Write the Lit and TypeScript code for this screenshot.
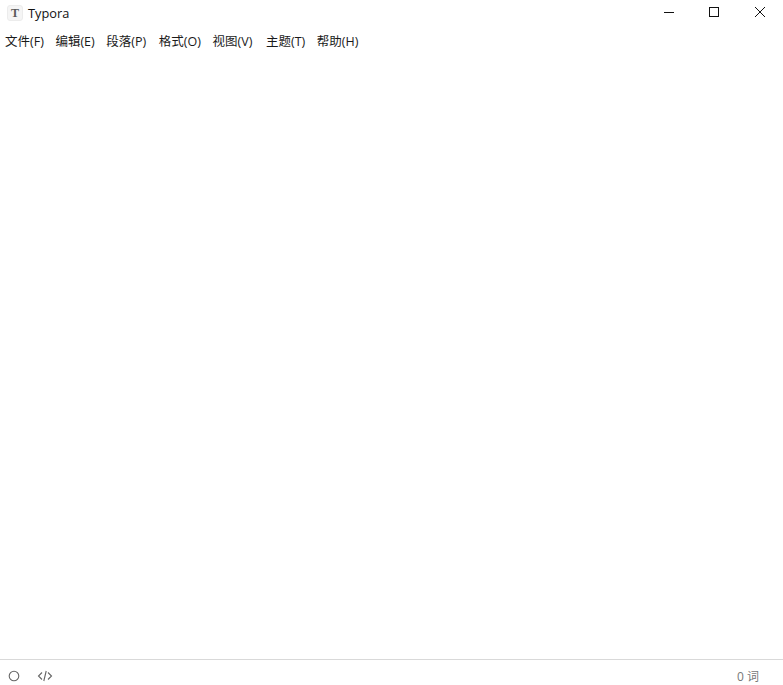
import { LitElement, html, css, svg } from "lit";
import { customElement } from "lit/decorators.js";

const MENUS = ["文件(F)", "编辑(E)", "段落(P)", "格式(O)", "视图(V)", "主题(T)", "帮助(H)"];

@customElement("app-root")
export class AppRoot extends LitElement {
  static styles = css`
    :host {
      display: flex;
      flex-direction: column;
      width: 783px;
      height: 685px;
      background: #fff;
      font-family: "Open Sans", "Noto Sans CJK SC", "Liberation Sans", sans-serif;
      color: #1a1a1a;
      overflow: hidden;
    }
    .title {
      display: flex;
      align-items: center;
      height: 26px;
      flex: none;
    }
    .logo {
      width: 14px;
      height: 14px;
      margin-left: 7px;
      border-radius: 3px;
      background: #f5f5f5;
      border: 1px solid #ececec;
      display: flex;
      align-items: center;
      justify-content: center;
      font: bold 12px "Liberation Serif", serif;
      color: #5a5a5a;
      box-sizing: content-box;
      line-height: 1;
    }
    .name {
      margin-left: 5px;
      font: 12.8px "Open Sans", sans-serif;
      color: #111;
    }
    .spacer { flex: 1; }
    .win { display: block; flex: none; }
    .menu {
      display: flex;
      gap: 11.6px;
      padding-left: 5px;
      height: 29px;
      align-items: center;
      flex: none;
      font-size: 12.5px;
      color: #1a1a1a;
    }
    .menu span:nth-child(3) { margin-right: 1px; }
    .menu span:nth-child(5) { margin-right: 2px; }
    .doc { flex: 1; }
    .status {
      flex: none;
      height: 26px;
      padding-top: 7px;
      box-sizing: border-box;
      border-top: 1px solid #d9d9d9;
      display: flex;
      align-items: center;
      color: #777;
      font-size: 12px;
    }
    .status svg { display: block; }
    .circle { margin-left: 8px; }
    .code { margin-left: 17px; }
    .count { margin-left: auto; margin-right: 24px; }
  `;

  render() {
    return html`
      <div class="title">
        <span class="logo">T</span>
        <span class="name">Typora</span>
        <span class="spacer"></span>
        <svg class="win" width="133" height="26" viewBox="0 0 133 26">
          ${svg`<path d="M14 12.5H24" stroke="#111" fill="none"/>
          <rect x="59.5" y="7.5" width="9" height="9" stroke="#111" fill="none"/>
          <path d="M105 7L115 17M115 7L105 17" stroke="#111" fill="none"/>`}
        </svg>
      </div>
      <div class="menu">${MENUS.map((m) => html`<span>${m}</span>`)}</div>
      <div class="doc"></div>
      <div class="status">
        <svg class="circle" width="12" height="12" viewBox="0 0 12 12">
          <circle cx="6" cy="6" r="4.8" fill="none" stroke="#666" stroke-width="1.1"/>
        </svg>
        <svg class="code" width="16" height="12" viewBox="0 0 16 12">
          <path d="M5 2.5L1.5 6L5 9.5M11 2.5L14.5 6L11 9.5M9.2 1L6.8 11" fill="none" stroke="#666" stroke-width="1.1"/>
        </svg>
        <span class="count">0 词</span>
      </div>
    `;
  }
}
